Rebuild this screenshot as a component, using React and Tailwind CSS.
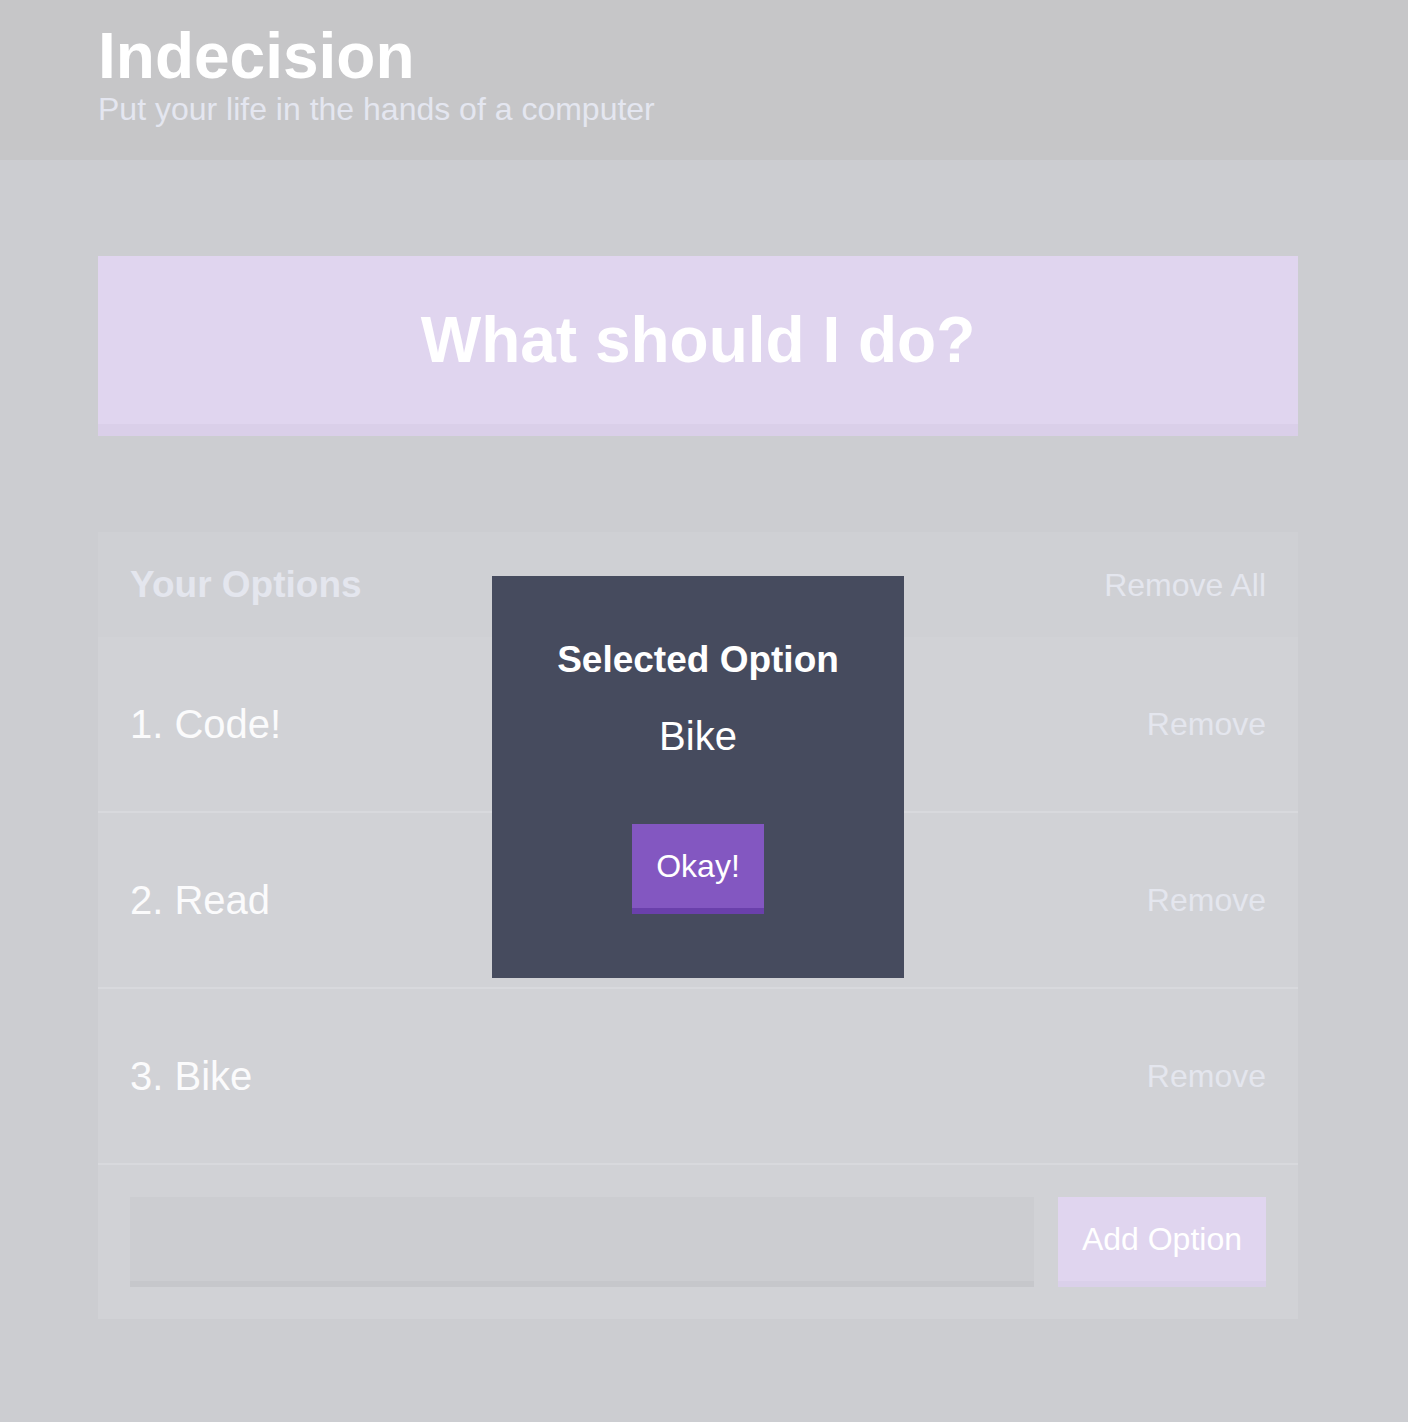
const options = ['Code!', 'Read', 'Bike']

function Header() {
  return (
    <header className="h-[160px] bg-[#c6c6c8]">
      <div className="ml-[98px] w-[1200px] pt-[24px]">
        <h1 className="text-[64px] font-bold leading-none text-white">Indecision</h1>
        <h2 className="mt-[5px] text-[32px] leading-none text-[#e4e6f0]">
          Put your life in the hands of a computer
        </h2>
      </div>
    </header>
  )
}

function OptionRow({ index, text }) {
  return (
    <div className="flex h-[176px] items-center justify-between border-b-2 border-[#d8d9dd] px-[32px]">
      <p className="text-[40px] leading-none text-[#fbfbfc]">
        {index}. {text}
      </p>
      <button className="text-[32px] leading-none text-[#e4e6ee]">Remove</button>
    </div>
  )
}

function SelectedModal() {
  return (
    <div className="absolute left-[492px] top-[576px] w-[412px] bg-[#464b5e] pt-[60px] pb-[64px] text-center">
      <h3 className="text-[37px] font-bold leading-[48px] text-white">Selected Option</h3>
      <p className="mt-[28px] text-[40px] leading-[48px] text-white">Bike</p>
      <button className="mt-[64px] h-[90px] border-b-[6px] border-[#6a40ab] bg-[#8357c1] px-[24px] text-[32px] leading-none text-white">
        Okay!
      </button>
    </div>
  )
}

export default function App() {
  return (
    <div
      className="relative min-h-[1422px] bg-[#cccdd1]"
      style={{ fontFamily: '"Liberation Sans", Arial, Helvetica, sans-serif' }}
    >
      <Header />
      <main className="ml-[98px] w-[1200px] pt-[96px]">
        <button className="flex h-[180px] w-full items-center justify-center border-b-[12px] border-[#dacfe9] bg-[#e0d5ef] text-[64px] font-bold leading-none text-white">
          What should I do?
        </button>

        <section className="mt-[96px] bg-[#d1d2d6]">
          <div className="flex h-[105px] items-center justify-between bg-[#cfd0d4] px-[32px]">
            <h3 className="text-[37px] font-bold leading-none text-[#e4e6ee]">Your Options</h3>
            <button className="text-[32px] leading-none text-[#e4e6ee]">Remove All</button>
          </div>
          {options.map((o, i) => (
            <OptionRow key={o} index={i + 1} text={o} />
          ))}
          <form className="flex gap-[24px] p-[32px]">
            <input className="h-[90px] flex-1 border-b-[6px] border-[#c6c7cb] bg-[#cccdd1] outline-none" />
            <button
              type="button"
              className="h-[90px] border-b-[6px] border-[#dad0ea] bg-[#e0d5ef] px-[24px] text-[32px] leading-none text-white"
            >
              Add Option
            </button>
          </form>
        </section>
      </main>
      <SelectedModal />
    </div>
  )
}
